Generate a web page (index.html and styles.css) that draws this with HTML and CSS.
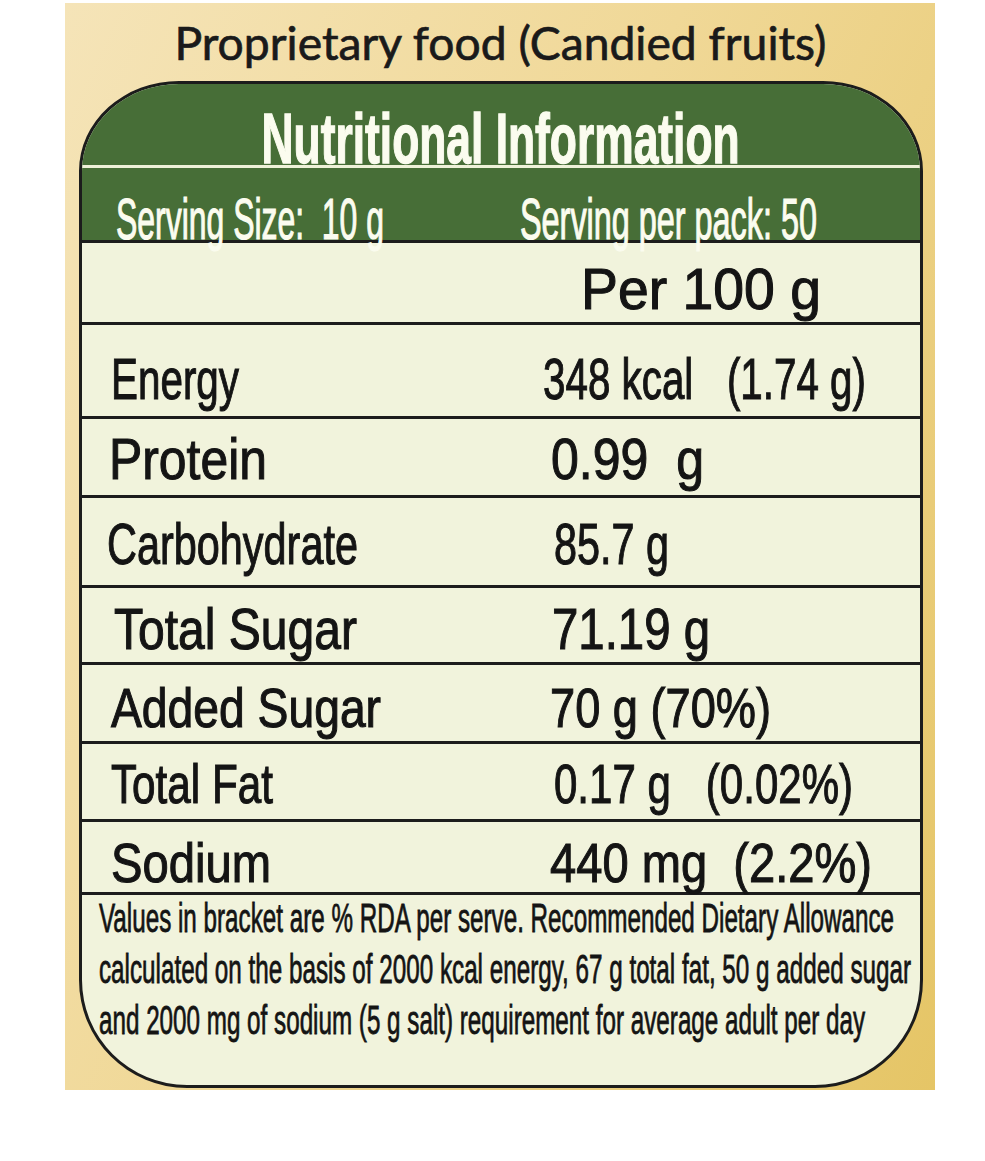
FILE: index.html
```html
<!DOCTYPE html>
<html lang="en">
<head>
<meta charset="utf-8">
<title>Nutritional Information</title>
<link rel="stylesheet" href="styles.css">
</head>
<body>
<div class="panel">
  <div class="title"><span class="fit fit-c" data-w="652">Proprietary food (Candied fruits)</span></div>
  <div class="card">
    <div class="head">
      <div class="head-title"><span class="fit fit-c" data-w="478">Nutritional Information</span></div>
      <div class="head-sep"></div>
      <div class="serving">
        <div class="serving-cell"><span class="fit" data-w="268">Serving Size:  10 g</span></div>
        <div class="serving-cell"><span class="fit" data-w="297">Serving per pack: 50</span></div>
      </div>
    </div>
    <div class="row row-per">
      <div class="cell lab"></div>
      <div class="cell val per"><span class="fit" data-w="240">Per 100 g</span></div>
    </div>
    <div class="row row-energy">
      <div class="cell lab"><span class="fit" data-w="128">Energy</span></div>
      <div class="cell val"><span class="fit" data-w="323">348 kcal   (1.74 g)</span></div>
    </div>
    <div class="row row-protein">
      <div class="cell lab"><span class="fit" data-w="158">Protein</span></div>
      <div class="cell val"><span class="fit" data-w="153">0.99  g</span></div>
    </div>
    <div class="row row-carb">
      <div class="cell lab"><span class="fit" data-w="251">Carbohydrate</span></div>
      <div class="cell val"><span class="fit" data-w="115">85.7 g</span></div>
    </div>
    <div class="row row-sugar">
      <div class="cell lab"><span class="fit" data-w="243">Total Sugar</span></div>
      <div class="cell val"><span class="fit" data-w="158">71.19 g</span></div>
    </div>
    <div class="row row-added">
      <div class="cell lab"><span class="fit" data-w="270">Added Sugar</span></div>
      <div class="cell val"><span class="fit" data-w="221">70 g (70%)</span></div>
    </div>
    <div class="row row-fat">
      <div class="cell lab"><span class="fit" data-w="162">Total Fat</span></div>
      <div class="cell val"><span class="fit" data-w="299">0.17 g   (0.02%)</span></div>
    </div>
    <div class="row row-sodium">
      <div class="cell lab"><span class="fit" data-w="160">Sodium</span></div>
      <div class="cell val"><span class="fit" data-w="322">440 mg  (2.2%)</span></div>
    </div>
    <div class="foot">
      <div class="foot-line"><span class="fit" data-w="795">Values in bracket are % RDA per serve. Recommended Dietary Allowance</span></div>
      <div class="foot-line"><span class="fit" data-w="812">calculated on the basis of 2000 kcal energy, 67 g total fat, 50 g added sugar</span></div>
      <div class="foot-line"><span class="fit" data-w="766">and 2000 mg of sodium (5 g salt) requirement for average adult per day</span></div>
    </div>
  </div>
</div>
<script src="script.js"></script>
</body>
</html>
```

FILE: styles.css
```css
html, body {
  margin: 0;
  padding: 0;
  background: #ffffff;
}

body {
  font-family: "Liberation Sans", Arial, sans-serif;
  color: #161616;
}

.panel {
  margin: 3px 0 0 65px;
  width: 870px;
  height: 1087px;
  background: linear-gradient(115deg, #f5e4b8 0%, #f0d897 45%, #e5c566 100%);
  box-sizing: border-box;
}

.fit {
  display: inline-block;
  white-space: pre;
  line-height: 1;
  transform-origin: 0 50%;
}

.fit-c {
  transform-origin: 50% 50%;
}

.title {
  height: 78px;
  box-sizing: border-box;
  padding-top: 11px;
  text-align: center;
  font-family: Lato, "Open Sans", sans-serif;
  font-size: 47px;
  color: #1a1a1a;
  white-space: nowrap;
  -webkit-text-stroke: 0.7px #1a1a1a;
}

.card {
  margin-left: 14px;
  width: 844px;
  height: 1007px;
  box-sizing: border-box;
  border: 3px solid #1c1c1c;
  border-radius: 100px 100px 108px 108px / 90px 90px 108px 108px;
  overflow: hidden;
  background: #f1f3dc;
}

.head {
  background: #476e37;
  border-bottom: 3px solid #1c1c1c;
  color: #fbfcef;
}

.head-title {
  height: 81px;
  box-sizing: border-box;
  padding-top: 14px;
  text-align: center;
  font-weight: bold;
  font-size: 71px;
  white-space: nowrap;
  -webkit-text-stroke: 1.4px #fbfcef;
}

.head-sep {
  height: 3px;
  background: #eef1d8;
}

.serving {
  height: 72px;
  box-sizing: border-box;
  padding: 17px 0 0 34px;
  display: grid;
  grid-template-columns: 404px minmax(0, 1fr);
  font-size: 58px;
  -webkit-text-stroke: 1.2px #fbfcef;
}

.row {
  display: grid;
  grid-template-columns: 439px minmax(0, 1fr);
  padding-left: 29px;
  box-sizing: border-box;
  border-bottom: 3px solid #1c1c1c;
  font-size: 58px;
  color: #141414;
  -webkit-text-stroke: 1.1px #141414;
}

.cell {
  min-width: 0;
}

.per {
  padding-left: 31px;
}

.row-per     { height: 82px; padding-top: 12px; }
.row-energy  { height: 94px; padding-top: 20px; }
.row-protein { height: 79px; padding-top: 6px; }
.row-carb    { height: 90px; padding-top: 12px; }
.row-sugar   { height: 77px; padding-top: 7px; }
.row-added   { height: 79px; padding-top: 10px; font-size: 56px; }
.row-fat     { height: 78px; padding-top: 7px; font-size: 56px; }
.row-sodium  { height: 73px; padding-top: 8px; font-size: 56px; }

.row-energy .val  { margin-left: -7px; }
.row-protein .lab { margin-left: -2px; }
.row-protein .val { margin-left: 1px; }
.row-carb .lab    { margin-left: -4px; }
.row-carb .val    { margin-left: 4px; }
.row-sugar .lab   { margin-left: 3px; }
.row-sugar .val   { margin-left: 2px; }
.row-fat .val     { margin-left: 4px; }

.foot {
  margin-top: -2px;
  padding-left: 17px;
  font-size: 40px;
  color: #141414;
  -webkit-text-stroke: 0.8px #141414;
}

.foot-line {
  height: 51px;
  line-height: 51px;
}

.foot-line .fit {
  line-height: 51px;
}
```

FILE: script.js
```js
function fitAll() {
  document.querySelectorAll('.fit[data-w]').forEach(function (el) {
    el.style.transform = 'none';
    var w = el.getBoundingClientRect().width;
    var target = parseFloat(el.getAttribute('data-w'));
    if (w > 0) {
      el.style.transform = 'scaleX(' + (target / w).toFixed(4) + ')';
    }
  });
}
fitAll();
if (document.fonts && document.fonts.ready) {
  document.fonts.ready.then(fitAll);
}
window.addEventListener('load', fitAll);
```
